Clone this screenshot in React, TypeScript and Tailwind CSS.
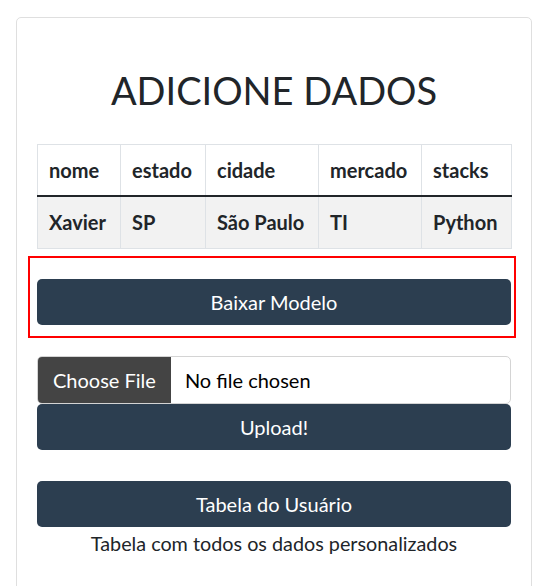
import React from "react";

const COLUMNS = [
  { key: "nome", width: "w-[83px]" },
  { key: "estado", width: "w-[85px]" },
  { key: "cidade", width: "w-[113px]" },
  { key: "mercado", width: "w-[103px]" },
  { key: "stacks", width: "w-[90px]" },
];

const ROW = ["Xavier", "SP", "São Paulo", "TI", "Python"];

function DarkButton({ children }: { children: React.ReactNode }) {
  return (
    <button className="w-full h-[46px] rounded-[5px] bg-[#2c3e50] text-white text-[20px] leading-[30px]">
      {children}
    </button>
  );
}

export default function App() {
  return (
    <div
      className="min-h-screen bg-white pt-[17px] pl-[16px] text-[#212529]"
      style={{ fontFamily: "Lato, 'Liberation Sans', sans-serif" }}
    >
      <div className="w-[516px] h-[590px] border border-[#dfdfdf] rounded-[5px] px-5 pt-[48px]">
        <h1 className="text-[38px] leading-[48px] text-center font-normal">
          ADICIONE DADOS
        </h1>

        {/* sample table */}
        <table className="mt-[30px] w-full table-fixed border-collapse text-[20px] leading-[30px]">
          <colgroup>
            {COLUMNS.map((c) => (
              <col key={c.key} className={c.width} />
            ))}
          </colgroup>
          <thead>
            <tr>
              {COLUMNS.map((c) => (
                <th
                  key={c.key}
                  className="border border-[#dee2e6] border-b-2 border-b-[#212529] px-[11px] pt-[10px] pb-[10px] text-left font-bold"
                >
                  {c.key}
                </th>
              ))}
            </tr>
          </thead>
          <tbody>
            <tr className="bg-[#f2f2f2]">
              {ROW.map((v) => (
                <td
                  key={v}
                  className="border border-[#dee2e6] px-[11px] pt-[10px] pb-[11px] font-bold"
                >
                  {v}
                </td>
              ))}
            </tr>
          </tbody>
        </table>

        {/* highlighted download */}
        <div className="mt-[7px] -ml-[9px] -mr-[5px] border-2 border-[#ff0000] pl-[7px] pr-[3px] pt-[21px] pb-[11px]">
          <DarkButton>Baixar Modelo</DarkButton>
        </div>

        {/* upload */}
        <div className="mt-[18px] h-[48px] flex items-stretch border border-[#d4d4d4] rounded-[5px] overflow-hidden text-[20px] leading-[30px]">
          <span className="flex items-center px-[15px] bg-[#444444] text-white">Choose File</span>
          <span className="flex items-center pl-[14px] text-black">No file chosen</span>
        </div>
        <DarkButton>Upload!</DarkButton>

        <div className="mt-[31px]">
          <DarkButton>Tabela do Usuário</DarkButton>
        </div>
        <p className="mt-px text-center text-[19.8px] leading-[30px]">
          Tabela com todos os dados personalizados
        </p>
      </div>
    </div>
  );
}
